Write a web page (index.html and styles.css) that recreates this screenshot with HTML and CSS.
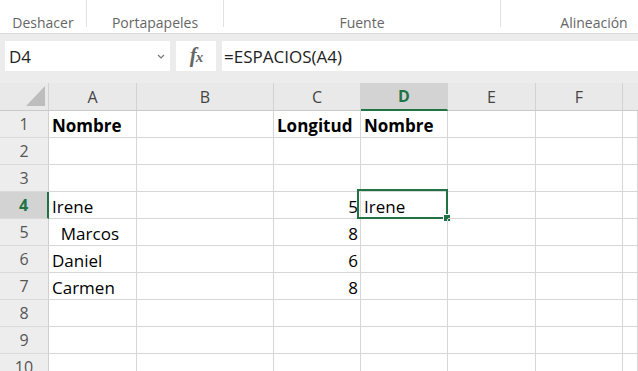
FILE: index.html
```html
<!DOCTYPE html>
<html lang="es">
<head>
<meta charset="utf-8">
<title>ESPACIOS</title>
<link rel="stylesheet" href="styles.css">
</head>
<body>
<div class="app">
  <div class="ribbon">
    <div class="group g1"><span>Deshacer</span></div>
    <div class="group g2"><span>Portapapeles</span></div>
    <div class="group g3"><span>Fuente</span></div>
    <div class="group g4"><span>Alineación</span></div>
  </div>
  <div class="formula-area">
    <div class="namebox">
      <span>D4</span>
      <svg class="chev" width="8" height="5" viewBox="0 0 8 5"><polyline points="1,1 4,4 7,1" fill="none" stroke="#777" stroke-width="1.2"/></svg>
    </div>
    <div class="fxbox"><span class="fx">f<span class="x">x</span></span></div>
    <div class="input">=ESPACIOS(A4)</div>
  </div>
  <div class="sheet">
    <div class="hd corner"><svg width="19" height="20" viewBox="0 0 19 20"><polygon points="0,20 19,0 19,20" fill="#bdbdbd"/></svg></div>
    <div class="hd col">A</div>
    <div class="hd col">B</div>
    <div class="hd col">C</div>
    <div class="hd col sel">D</div>
    <div class="hd col">E</div>
    <div class="hd col">F</div>
    <div class="hd col last"></div>

    <div class="rh">1</div><div class="c b">Nombre</div><div class="c"></div><div class="c b">Longitud</div><div class="c b">Nombre</div><div class="c"></div><div class="c"></div><div class="c"></div>
    <div class="rh">2</div><div class="c"></div><div class="c"></div><div class="c"></div><div class="c"></div><div class="c"></div><div class="c"></div><div class="c"></div>
    <div class="rh">3</div><div class="c"></div><div class="c"></div><div class="c"></div><div class="c"></div><div class="c"></div><div class="c"></div><div class="c"></div>
    <div class="rh sel">4</div><div class="c">Irene</div><div class="c"></div><div class="c num">5</div><div class="c active">Irene<span class="selbox"><span class="handle"></span></span></div><div class="c"></div><div class="c"></div><div class="c"></div>
    <div class="rh">5</div><div class="c pre">  Marcos</div><div class="c"></div><div class="c num">8</div><div class="c"></div><div class="c"></div><div class="c"></div><div class="c"></div>
    <div class="rh">6</div><div class="c">Daniel</div><div class="c"></div><div class="c num">6</div><div class="c"></div><div class="c"></div><div class="c"></div><div class="c"></div>
    <div class="rh">7</div><div class="c">Carmen</div><div class="c"></div><div class="c num">8</div><div class="c"></div><div class="c"></div><div class="c"></div><div class="c"></div>
    <div class="rh">8</div><div class="c"></div><div class="c"></div><div class="c"></div><div class="c"></div><div class="c"></div><div class="c"></div><div class="c"></div>
    <div class="rh">9</div><div class="c"></div><div class="c"></div><div class="c"></div><div class="c"></div><div class="c"></div><div class="c"></div><div class="c"></div>
    <div class="rh">10</div><div class="c"></div><div class="c"></div><div class="c"></div><div class="c"></div><div class="c"></div><div class="c"></div><div class="c"></div>
  </div>
</div>
</body>
</html>
```

FILE: styles.css
```css
* { box-sizing: border-box; }
html, body { margin: 0; padding: 0; }
body {
  width: 638px;
  height: 371px;
  overflow: hidden;
  background: #fff;
  font-family: "Open Sans", "Liberation Sans", sans-serif;
}
.app { width: 638px; height: 371px; overflow: hidden; }

.ribbon {
  display: flex;
  height: 34px;
  background: #fff;
  border-bottom: 1px solid #dadada;
  overflow: hidden;
}
.group {
  flex: none;
  height: 27px;
  display: flex;
  justify-content: center;
  align-items: flex-end;
  border-right: 1px solid #e1e1e1;
  font-size: 14px;
  line-height: 19px;
  color: #666;
}
.group span { position: relative; top: 5px; white-space: nowrap; }
.g1 { width: 87px; }
.g2 { width: 137px; }
.g3 { width: 277px; }
.g4 { width: 186px; border-right: none; }

.formula-area {
  display: flex;
  height: 49px;
  padding: 7px 0 12px 0;
  background: #ececec;
}
.namebox {
  margin-left: 5px;
  width: 165px;
  background: #fff;
  display: flex;
  align-items: center;
  justify-content: space-between;
  padding: 0 5px 0 4px;
  font-size: 17px;
  color: #222;
}
.fxbox {
  margin-left: 6px;
  width: 40px;
  background: #fff;
  display: flex;
  align-items: center;
  justify-content: center;
}
.fx {
  font-family: "Liberation Serif", serif;
  font-style: italic;
  font-weight: bold;
  font-size: 21px;
  color: #666;
  position: relative;
  top: -1px;
  letter-spacing: -1px;
}
.fx .x { font-size: 15px; }
.input {
  margin-left: 6px;
  flex: 1;
  background: #fff;
  display: flex;
  align-items: center;
  padding-left: 2px;
  font-size: 17px;
  color: #222;
}

.sheet {
  display: grid;
  grid-template-columns: 49px 88px 137px 87px 87px 88px 87px 1fr;
  grid-template-rows: 28px;
  grid-auto-rows: 27px;
}
.hd {
  background: #e9e9e9;
  border-right: 1px solid #d2d2d2;
  border-bottom: 1px solid #c9c9c9;
  display: flex;
  align-items: center;
  justify-content: center;
  font-size: 16px;
  color: #444;
}
.hd.corner {
  align-items: flex-end;
  justify-content: flex-end;
  padding: 0 3px 4px 0;
}
.hd.corner svg { display: block; }
.hd.last { border-right: none; }
.hd.sel {
  background: #d3d3d3;
  color: #217346;
  font-weight: bold;
  border-bottom: 2px solid #217346;
}
.rh {
  background: #ededed;
  border-right: 1px solid #cfcfcf;
  border-bottom: 1px solid #dadada;
  display: flex;
  align-items: center;
  justify-content: center;
  font-size: 16px;
  color: #555;
}
.rh.sel {
  background: #d3d3d3;
  color: #217346;
  font-weight: bold;
  border-right: 2px solid #217346;
}
.c {
  position: relative;
  border-right: 1px solid #d6d6d6;
  border-bottom: 1px solid #d6d6d6;
  display: flex;
  align-items: flex-end;
  padding: 0 2px 0 3px;
  font-size: 17px;
  color: #000;
  white-space: nowrap;
}
.c.b { font-weight: bold; }
.c.num { justify-content: flex-end; }
.c.pre { white-space: pre; }
.selbox {
  position: absolute;
  top: -3px;
  left: -4px;
  right: -1px;
  bottom: -1px;
  border: 2px solid #217346;
}
.handle {
  position: absolute;
  right: -4px;
  bottom: -4px;
  width: 6px;
  height: 6px;
  background: #217346;
  outline: 1px solid #fff;
}
```
